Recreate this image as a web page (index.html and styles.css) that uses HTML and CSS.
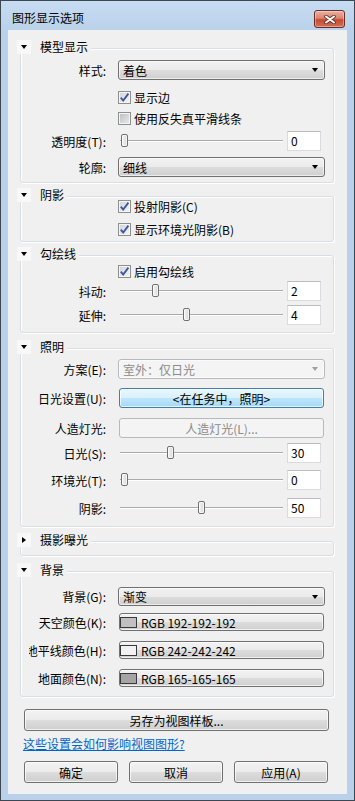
FILE: index.html
```html
<!DOCTYPE html>
<html lang="zh-CN">
<head>
  <meta charset="UTF-8" />
  <meta name="viewport" content="width=device-width, initial-scale=1.0"/>
  <title>图形显示选项</title>
  <link rel="stylesheet" href="styles.css">
</head>
<body>
  <div class="window">
    <div class="titlebar">
      <span class="title">图形显示选项</span>
      <button class="close-btn">
        <svg width="12" height="9" viewBox="0 0 12 9">
          <path d="M2 1.5 L10 7.5 M10 1.5 L2 7.5" stroke="#6a2e24" stroke-width="3.6" stroke-linecap="round"/>
          <path d="M2 1.5 L10 7.5 M10 1.5 L2 7.5" stroke="#fff" stroke-width="2" stroke-linecap="round"/>
        </svg>
      </button>
    </div>

    <div class="client">

      <div class="group model">
        <div class="group-head"><span class="toggle"></span><span>模型显示</span></div>
        <div class="rows">
          <div class="lbl"><span>样式:</span></div>
          <div class="combo"><span>着色</span><i class="arrow"></i></div>

          <div class="check"><span class="box on"><svg viewBox="0 0 11 11"><path d="M1.8 5.6 L4.2 8.6 L9.4 1.6"/></svg></span>显示边</div>
          <div class="check"><span class="box"></span>使用反失真平滑线条</div>

          <div class="lbl"><span>透明度(T):</span></div>
          <div class="slide"><div class="track"><span class="thumb" style="left: 1px"></span></div><div class="num">0</div></div>

          <div class="lbl"><span>轮廓:</span></div>
          <div class="combo"><span>细线</span><i class="arrow"></i></div>
        </div>
      </div>

      <div class="group shadow">
        <div class="group-head"><span class="toggle"></span><span>阴影</span></div>
        <div class="rows">
          <div class="check"><span class="box on"><svg viewBox="0 0 11 11"><path d="M1.8 5.6 L4.2 8.6 L9.4 1.6"/></svg></span>投射阴影(C)</div>
          <div class="check"><span class="box on"><svg viewBox="0 0 11 11"><path d="M1.8 5.6 L4.2 8.6 L9.4 1.6"/></svg></span>显示环境光阴影(B)</div>
        </div>
      </div>

      <div class="group sketch">
        <div class="group-head"><span class="toggle"></span><span>勾绘线</span></div>
        <div class="rows">
          <div class="check"><span class="box on"><svg viewBox="0 0 11 11"><path d="M1.8 5.6 L4.2 8.6 L9.4 1.6"/></svg></span>启用勾绘线</div>

          <div class="lbl"><span>抖动:</span></div>
          <div class="slide"><div class="track"><span class="thumb" style="left: 32px"></span></div><div class="num">2</div></div>

          <div class="lbl"><span>延伸:</span></div>
          <div class="slide"><div class="track"><span class="thumb" style="left: 63px"></span></div><div class="num">4</div></div>
        </div>
      </div>

      <div class="group lighting">
        <div class="group-head"><span class="toggle"></span><span>照明</span></div>
        <div class="rows">
          <div class="lbl"><span>方案(E):</span></div>
          <div class="combo disabled"><span>室外：仅日光</span><i class="arrow"></i></div>

          <div class="lbl"><span>日光设置(U):</span></div>
          <button class="btn wide focus">&lt;在任务中，照明&gt;</button>

          <div class="lbl"><span>人造灯光:</span></div>
          <button class="btn wide disabled">人造灯光(L)...</button>

          <div class="lbl"><span>日光(S):</span></div>
          <div class="slide"><div class="track"><span class="thumb" style="left: 47px"></span></div><div class="num">30</div></div>

          <div class="lbl"><span>环境光(T):</span></div>
          <div class="slide"><div class="track"><span class="thumb" style="left: 1px"></span></div><div class="num">0</div></div>

          <div class="lbl"><span>阴影:</span></div>
          <div class="slide"><div class="track"><span class="thumb" style="left: 78px"></span></div><div class="num">50</div></div>
        </div>
      </div>

      <div class="group exposure">
        <div class="group-head"><span class="toggle closed"></span><span>摄影曝光</span></div>
      </div>

      <div class="group background">
        <div class="group-head"><span class="toggle"></span><span>背景</span></div>
        <div class="rows">
          <div class="lbl"><span>背景(G):</span></div>
          <div class="combo short"><span>渐变</span><i class="arrow"></i></div>

          <div class="lbl"><span>天空颜色(K):</span></div>
          <button class="btn wide color"><span class="swatch" style="background: rgb(192,192,192)"></span>RGB 192-192-192</button>

          <div class="lbl"><span>地平线颜色(H):</span></div>
          <button class="btn wide color"><span class="swatch" style="background: rgb(242,242,242)"></span>RGB 242-242-242</button>

          <div class="lbl"><span>地面颜色(N):</span></div>
          <button class="btn wide color"><span class="swatch" style="background: rgb(165,165,165)"></span>RGB 165-165-165</button>
        </div>
      </div>

      <button class="btn save">另存为视图样板...</button>
      <a class="help-link" href="#">这些设置会如何影响视图图形?</a>

      <div class="actions">
        <button class="btn">确定</button>
        <button class="btn">取消</button>
        <button class="btn">应用(A)</button>
      </div>
    </div>
  </div>
</body>
</html>
```

FILE: styles.css
```css
* {
  box-sizing: border-box;
}

body {
  margin: 0;
  font-family: "Noto Sans CJK SC", "Liberation Sans", sans-serif;
  font-size: 12px;
  color: #000;
  background: #fff;
}

.window {
  width: 355px;
  height: 801px;
  border: 1px solid #3e4650;
  background: linear-gradient(#c6dcf2, #b9d1ea 30px);
  display: flex;
  flex-direction: column;
}

.titlebar {
  height: 29px;
  flex: none;
  display: flex;
  justify-content: space-between;
  align-items: flex-start;
  padding: 10px 9px 0 11px;
}

.title {
  line-height: 14px;
}

.close-btn {
  width: 31px;
  height: 18px;
  margin-top: -1px;
  padding: 0;
  border: 1px solid #6d2c22;
  border-radius: 3px;
  background: linear-gradient(#eab0a2, #d98570 45%, #c44a30 55%, #d2705a);
  box-shadow: inset 0 0 0 1px rgba(255,255,255,0.35);
  display: flex;
  align-items: center;
  justify-content: center;
}

.client {
  flex: 1;
  margin: 0 7px 6px;
  padding: 18px 13px 0 12px;
  background: #f0f0f0;
  display: flex;
  flex-direction: column;
}

/* group boxes */

.group {
  position: relative;
  border: 1px solid #d5dfe5;
  border-radius: 3px;
  box-shadow: inset 1px 1px 0 #fff, 1px 1px 0 #fff;
}

.group + .group {
  margin-top: 13px;
}

.group.lighting,
.group.background {
  margin-top: 15px;
}

.group.exposure {
  margin-top: 14px;
  height: 15px;
}

.group-head {
  position: absolute;
  top: -9px;
  left: -4px;
  display: flex;
  align-items: center;
  gap: 9px;
  padding-right: 3px;
  line-height: 14px;
  background: #f0f0f0;
}

.toggle {
  width: 14px;
  height: 14px;
  display: flex;
  align-items: center;
  justify-content: center;
  background: #f8f8f8;
}

.toggle::after {
  content: "";
  border-left: 3px solid transparent;
  border-right: 3px solid transparent;
  border-top: 4px solid #000;
}

.toggle.closed::after {
  border-top: 3px solid transparent;
  border-bottom: 3px solid transparent;
  border-left: 4px solid #000;
  border-right: 0;
}

.rows {
  display: grid;
  grid-template-columns: 78px 207px;
  column-gap: 11px;
  align-items: start;
  padding: 0 8px;
}

.model .rows {
  grid-template-rows: 29px 21px 21px 26px 20px;
  padding-top: 11px;
  padding-bottom: 5px;
}

.shadow .rows {
  grid-template-rows: 23px 16px;
  padding-top: 1px;
  padding-bottom: 4px;
}

.sketch .rows {
  grid-template-rows: 18px 24px 20px;
  padding-top: 7px;
  padding-bottom: 7px;
}

.lighting .rows {
  grid-template-rows: 29px 30px 25px 27px 28px 20px;
  padding-top: 10px;
  padding-bottom: 8px;
}

.background .rows {
  grid-template-rows: 26px 28px 28px 18px;
  padding-top: 15px;
  padding-bottom: 9px;
}

.lbl {
  height: 20px;
  display: flex;
  justify-content: flex-end;
  align-items: center;
  overflow: hidden;
  white-space: nowrap;
  padding-right: 1px;
}

.background .lbl {
  height: 19px;
}

/* controls */

.combo {
  height: 20px;
  border: 1px solid #707070;
  border-radius: 3px;
  background: linear-gradient(#f2f2f2, #ebebeb 50%, #dddddd 50%, #cfcfcf);
  box-shadow: inset 0 0 0 1px rgba(255,255,255,0.6);
  display: flex;
  align-items: center;
  justify-content: space-between;
  padding: 0 6px 0 4px;
}

.combo.short {
  height: 19px;
}

.combo.disabled {
  border-color: #b7babc;
  background: #f4f4f4;
  color: #8a8a8a;
}

.arrow {
  border-left: 3.5px solid transparent;
  border-right: 3.5px solid transparent;
  border-top: 4px solid #000;
}

.combo.disabled .arrow {
  border-top-color: #a0a0a0;
}

.check {
  grid-column: 2;
  height: 16px;
  display: flex;
  align-items: center;
  gap: 3px;
  white-space: nowrap;
}

.box {
  width: 13px;
  height: 13px;
  border: 1px solid #8e8f8f;
  background: linear-gradient(135deg, #b9bdc2, #ececec);
  box-shadow: inset 0 0 0 1px #f4f4f4;
}

.box.on {
  background: linear-gradient(135deg, #d0d3d8, #f6f6f6);
}

.box svg {
  display: block;
  width: 11px;
  height: 11px;
  fill: none;
  stroke: #3c549c;
  stroke-width: 1.8;
}

.slide {
  height: 20px;
  display: flex;
  align-items: center;
  gap: 4px;
}

.track {
  position: relative;
  width: 163px;
  height: 2px;
  margin-left: 2px;
  background: linear-gradient(#aaaaaa 50%, #ffffff 50%);
}

.thumb {
  position: absolute;
  top: -6px;
  width: 7px;
  height: 13px;
  border: 1px solid #707070;
  border-radius: 2px;
  background: linear-gradient(90deg, #f4f4f4, #d8d8d8);
  box-shadow: inset 0 0 0 1px rgba(255,255,255,0.7);
}

.num {
  width: 34px;
  height: 20px;
  padding: 1px 3px;
  line-height: 16px;
  background: #fff;
  border: 1px solid #d9dbde;
  border-top-color: #b9bcc2;
}

.btn {
  height: 22px;
  padding: 0;
  border: 1px solid #707070;
  border-radius: 3px;
  background: linear-gradient(#f2f2f2, #ebebeb 50%, #dddddd 50%, #cfcfcf);
  box-shadow: inset 0 0 0 1px rgba(255,255,255,0.7);
  font: inherit;
  color: #000;
  display: flex;
  align-items: center;
  justify-content: center;
}

.btn.wide {
  width: 205px;
  height: 20px;
  margin-left: 1px;
}

.btn.focus {
  border-color: #3c7fb1;
  background: linear-gradient(#eaf6fd, #d9f0fc 50%, #bee6fd 50%, #a7d9f5);
}

.btn.disabled {
  border-color: #b7babc;
  background: #f4f4f4;
  box-shadow: none;
  color: #8a8a8a;
}

.btn.color {
  height: 18px;
  justify-content: flex-start;
  gap: 4px;
  padding-left: 0;
}

.swatch {
  width: 17px;
  height: 11px;
  border: 1px solid #3a3a3a;
}

.btn.save {
  width: 305px;
  margin: 12px 0 0 4px;
}

.help-link {
  margin: 6px 0 0 3px;
  line-height: 14px;
  color: #0066cc;
  align-self: flex-start;
}

.actions {
  display: flex;
  gap: 11px;
  margin: 10px 0 0 4px;
}

.actions .btn {
  width: 94px;
}
```
